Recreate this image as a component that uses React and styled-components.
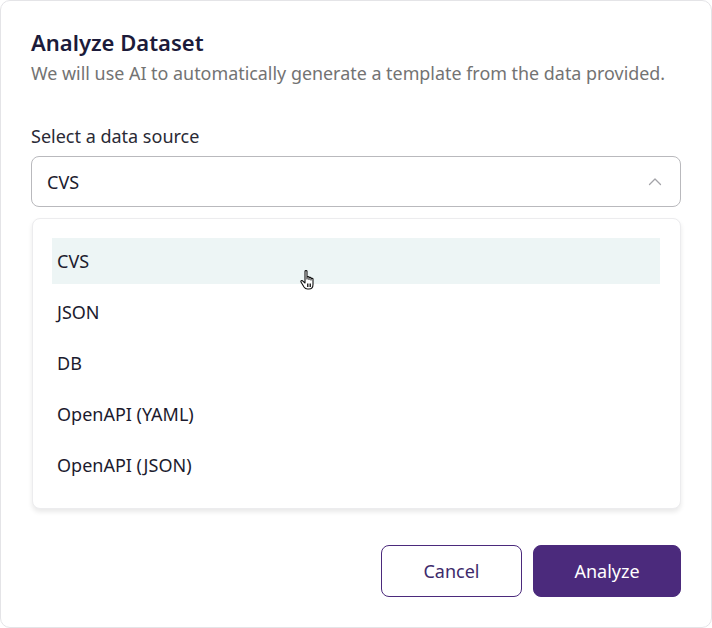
import React from "react";
import styled, { createGlobalStyle } from "styled-components";

const Global = createGlobalStyle`
    html, body {
        margin: 0;
        padding: 0;
        background: #ffffff;
    }
    body {
        font-family: "Noto Sans", "Open Sans", sans-serif;
    }
    * {
        box-sizing: border-box;
    }
`;

const Card = styled.div`
    width: 712px;
    height: 628px;
    border: 1px solid #e4e4e7;
    border-radius: 10px;
    background: #ffffff;
    padding: 25px 30px 0 30px;
    display: flex;
    flex-direction: column;
`;

const Title = styled.h2`
    margin: 0;
    font-size: 22px;
    line-height: 32px;
    font-weight: 600;
    color: #1c1b3a;
`;

const Subtitle = styled.p`
    margin: 1px 0 0;
    font-size: 17.9px;
    line-height: 28px;
    color: #737373;
`;

const Label = styled.div`
    margin-top: 36px;
    font-size: 18px;
    line-height: 26px;
    color: #2a2a35;
`;

const Field = styled.div`
    margin-top: 7px;
    height: 51px;
    border: 1px solid #b9b9bd;
    border-radius: 8px;
    display: flex;
    align-items: center;
    justify-content: space-between;
    padding: 0 18px 0 15px;
    font-size: 18px;
    color: #1c1b2e;
`;

const Menu = styled.ul`
    list-style: none;
    margin: 11px 0 0 1px;
    padding: 19px 20px 20px 19px;
    border: 1px solid #ececee;
    border-radius: 8px;
    background: #ffffff;
    box-shadow: 0 3px 5px rgba(0, 0, 0, 0.09);
    display: flex;
    flex-direction: column;
    gap: 5px;
    position: relative;
`;

const Option = styled.li`
    height: 46px;
    display: flex;
    align-items: center;
    padding-left: 5px;
    font-size: 18px;
    color: #1c1b2e;
    background: ${p => (p.$active ? "#edf5f5" : "transparent")};
`;

const Cursor = styled.svg`
    position: absolute;
    left: 266px;
    top: 50px;
`;

const Actions = styled.div`
    margin-top: 36px;
    display: flex;
    justify-content: flex-end;
    gap: 11px;
`;

const Button = styled.button`
    height: 52px;
    width: ${p => (p.$primary ? "148px" : "141px")};
    border-radius: 8px;
    font-family: inherit;
    font-size: 18px;
    cursor: pointer;
    border: 1px solid #4b2a7c;
    background: ${p => (p.$primary ? "#4b2a7c" : "#ffffff")};
    color: ${p => (p.$primary ? "#ffffff" : "#3d2a6b")};
`;

const options = ["CVS", "JSON", "DB", "OpenAPI (YAML)", "OpenAPI (JSON)"];

export default function App() {
    return (
        <>
            <Global />
            <Card>
                <Title>Analyze Dataset</Title>
                <Subtitle>We will use AI to automatically generate a template from the data provided.</Subtitle>
                <Label>Select a data source</Label>
                <Field>
                    <span>CVS</span>
                    <svg width="14" height="10" viewBox="0 0 14 10" fill="none">
                        <path d="M1.5 7.5 L7 2 L12.5 7.5" stroke="#a3a3a8" strokeWidth="1.3" strokeLinecap="round" strokeLinejoin="round" />
                    </svg>
                </Field>
                <Menu>
                    {options.map((o, i) => (
                        <Option key={o} $active={i === 0}>{o}</Option>
                    ))}
                    <Cursor width="20" height="24" viewBox="0 0 20 24">
                        <path
                            d="M6 2.2 C6 1.2 8 1.2 8 2.2 V10 V8.3 C8 7.3 10 7.3 10 8.3 V10.5 V9 C10 8 12 8 12 9 V11 V10 C12 9 14 9 14 10 V15.5 C14 18 12.5 20 10 20 H8.5 C6.8 20 5.8 19.2 5 18 L2 13 C1.4 12 2.6 11 3.6 11.8 L6 14 Z"
                            fill="#ffffff"
                            stroke="#111111"
                            strokeWidth="1.1"
                            strokeLinejoin="round"
                        />
                        <path d="M8.5 14.5 V18 M10 14.5 V18 M11.5 14.5 V18" stroke="#111111" strokeWidth="0.9" />
                    </Cursor>
                </Menu>
                <Actions>
                    <Button>Cancel</Button>
                    <Button $primary>Analyze</Button>
                </Actions>
            </Card>
        </>
    );
}
